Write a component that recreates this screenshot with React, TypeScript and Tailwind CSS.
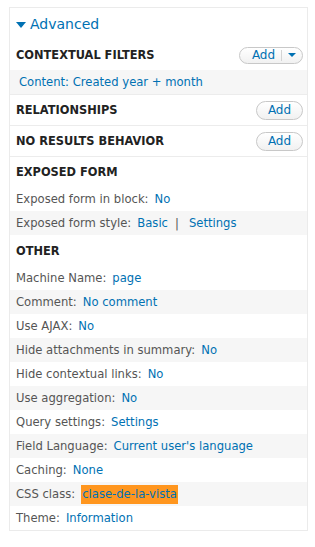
import React from "react";

const LINK = "text-[#0071b3]";

function AddButton({ split = false }: { split?: boolean }) {
  if (split) {
    return (
      <div className="flex h-[17px] w-[64px] items-center rounded-full border border-[#c8c8c8] bg-gradient-to-b from-white to-[#f1f1f1]">
        <span className={`flex-1 pl-[6px] text-center text-[12px] leading-none ${LINK}`}>Add</span>
        <span className="h-[11px] w-px bg-[#d4d4d4]" />
        <span className="flex w-[20px] items-center justify-center">
          <span className="h-0 w-0 border-x-[4px] border-t-[4px] border-x-transparent border-t-[#0071b3]" />
        </span>
      </div>
    );
  }
  return (
    <div className={`flex h-[19px] w-[47px] items-center justify-center rounded-full border border-[#c8c8c8] bg-gradient-to-b from-white to-[#f1f1f1] text-[12px] leading-none ${LINK}`}>
      Add
    </div>
  );
}

function Heading({ title, button, border = false, split = false }: { title: string; button?: boolean; border?: boolean; split?: boolean }) {
  return (
    <div className={`flex h-[30px] items-center justify-between pl-[6px] pr-[4px] ${border ? "h-[31px] border-b border-[#ececec]" : ""}`}>
      <span className="pt-[2px] text-[11.4px] font-bold uppercase text-[#222]">{title}</span>
      {button && <AddButton split={split} />}
    </div>
  );
}

function Row({ label, value, grey, highlight }: { label: string; value: React.ReactNode; grey?: boolean; highlight?: boolean }) {
  return (
    <div className={`flex h-[24px] items-center pl-[6px] pt-[1px] text-[11.6px] ${grey ? "bg-[#f6f6f6]" : ""}`}>
      <span className="text-[#555]">{label}:</span>
      <span className={`ml-[6px] ${LINK} ${highlight ? "bg-[#ff961f] px-[1px] py-[1px]" : ""}`}>{value}</span>
    </div>
  );
}

const other: [string, string][] = [
  ["Machine Name", "page"],
  ["Comment", "No comment"],
  ["Use AJAX", "No"],
  ["Hide attachments in summary", "No"],
  ["Hide contextual links", "No"],
  ["Use aggregation", "No"],
  ["Query settings", "Settings"],
  ["Field Language", "Current user's language"],
  ["Caching", "None"],
  ["CSS class", "clase-de-la-vista"],
  ["Theme", "Information"],
];

export default function App() {
  return (
    <div className="h-[547px] w-[315px] bg-white px-[9px] pt-[7px] font-['DejaVu_Sans',sans-serif]">
      <div className="w-[299px] border border-[#ebebeb]">
        {/* collapsible title */}
        <div className="flex h-[32px] items-center pl-[6px] pt-[1px]">
          <span className="mr-[4px] h-0 w-0 border-x-[5px] border-t-[6px] border-x-transparent border-t-[#0071b3]" />
          <span className={`text-[14px] ${LINK}`}>Advanced</span>
        </div>

        <Heading title="Contextual filters" button split />
        <div className="flex h-[25px] items-center border-b border-[#ececec] bg-[#f6f6f6] pl-[9px] pt-[1px] text-[11.6px]">
          <span className={LINK}>Content: Created year + month</span>
        </div>
        <Heading title="Relationships" button border />
        <Heading title="No results behavior" button border />

        <Heading title="Exposed form" />
        <div className="pb-[1px]">
          <Row label="Exposed form in block" value="No" />
          <div className="flex h-[24px] items-center bg-[#f6f6f6] pl-[6px] pt-[1px] text-[11.6px]">
            <span className="text-[#555]">Exposed form style:</span>
            <span className={`ml-[6px] ${LINK}`}>Basic</span>
            <span className="ml-[7px] text-[#555]">|</span>
            <span className={`ml-[10px] ${LINK}`}>Settings</span>
          </div>
        </div>

        <Heading title="Other" />
        <div>
          {other.map(([label, value], i) => (
            <Row key={label} label={label} value={value} grey={i % 2 === 1} highlight={label === "CSS class"} />
          ))}
        </div>
      </div>
    </div>
  );
}
